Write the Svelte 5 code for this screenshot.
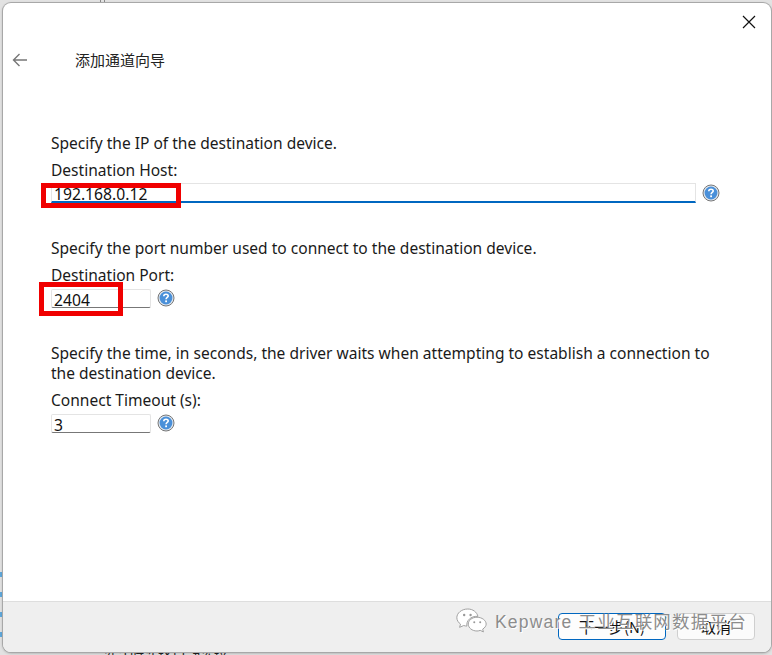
<script>
  const fields = [
    { intro: ['Specify the IP of the destination device.'], label: 'Destination Host:', value: '192.168.0.12', wide: true },
    { intro: ['Specify the port number used to connect to the destination device.'], label: 'Destination Port:', value: '2404' },
    { intro: ['Specify the time, in seconds, the driver waits when attempting to establish a connection to', 'the destination device.'], label: 'Connect Timeout (s):', value: '3' }
  ];
  const ticks = [572, 592, 612, 632];
</script>

<div class="screen">
  <div class="backdrop-line v1"></div>
  <div class="backdrop-line v2"></div>
  <div class="backdrop-text">设计时选择自动连接。</div>
  {#each ticks as t}
    <div class="tick" style="top: {t}px"></div>
  {/each}
  <div class="dialog">
    <header class="titlebar">
      <button class="close" aria-label="close">
        <svg width="14" height="14" viewBox="0 0 14 14"><path d="M1 1L13 13M13 1L1 13" stroke="#111" stroke-width="1.2" fill="none"/></svg>
      </button>
      <div class="nav">
        <svg class="back" width="16" height="14" viewBox="0 0 16 14"><path d="M15 7H1.5M7.5 1L1.5 7L7.5 13" stroke="#777" stroke-width="1.4" fill="none"/></svg>
        <span class="title">添加通道向导</span>
      </div>
    </header>
    <main class="content">
      {#each fields as f}
        <section class="field">
          {#each f.intro as line}<p>{line}</p>{/each}
          <label for={f.label}>{f.label}</label>
          <div class="row">
            <div class="input" class:wide={f.wide} id={f.label}>{f.value}</div>
            <svg class="help" width="18" height="18" viewBox="0 0 18 18">
              <circle cx="9" cy="9" r="8" fill="#dfe6ee" stroke="#777" stroke-width="1"/>
              <circle cx="9" cy="9" r="6.4" fill="#4a90d9"/>
              <path d="M6.8 7.2C6.8 5.9 7.8 5.2 9 5.2C10.3 5.2 11.2 6 11.2 7C11.2 8.4 9.1 8.5 9.1 10.2" stroke="#fff" stroke-width="1.6" fill="none"/>
              <rect x="8.2" y="11.4" width="1.8" height="1.8" fill="#fff"/>
            </svg>
          </div>
        </section>
      {/each}
    </main>
    <footer class="footer">
      <button class="btn primary">下一步(N)</button>
      <button class="btn">取消</button>
    </footer>
  </div>
  <div class="mark one"></div>
  <div class="mark two"></div>
  <div class="watermark">
    <svg width="33" height="28" viewBox="0 0 36 28">
      <path d="M14 2C7 2 2 6.500 2 11.500C2 14.500 4 17 6 18.500L5 22L9.500 20C11 20.500 12 20.600 13 20.600C12 15 17 9.500 25 10C24 5.500 19.500 2 14 2Z" fill="#fff" stroke="#999" stroke-width="1"/>
      <path d="M24 11C18.500 11 14.500 14.500 14.500 18.500C14.500 22.500 18.500 26 24 26C25.500 26 26.500 25.700 27.500 25.300L31 27L30.200 24C32.500 22.500 34 20.500 34 18.500C34 14.500 29.500 11 24 11Z" fill="#fff" stroke="#999" stroke-width="1"/>
      <circle cx="10" cy="8.500" r="1.300" fill="#999"/><circle cx="17" cy="8.500" r="1.300" fill="#999"/>
      <circle cx="21" cy="16.500" r="1.100" fill="#999"/><circle cx="27.500" cy="16.500" r="1.100" fill="#999"/>
    </svg>
    <span>Kepware 工业互联网数据平台</span>
  </div>
</div>

<style>
  :global(body) { margin: 0; }
  .screen {
    position: relative;
    width: 772px;
    height: 655px;
    overflow: hidden;
    background: #e2e2e2;
    font-family: "Noto Sans", "Noto Sans CJK SC", sans-serif;
  }
  .backdrop-line { position: absolute; top: 0; width: 1px; height: 4px; background: #888; }
  .v1 { left: 100px; }
  .v2 { left: 104px; }
  .tick { position: absolute; left: 0; width: 2px; height: 5px; background: #5fa8dc; }
  .backdrop-text {
    position: absolute;
    left: 102px;
    top: 647px;
    font-size: 14px;
    line-height: 20px;
    color: #222;
    white-space: nowrap;
  }
  .dialog {
    position: absolute;
    left: 3px;
    top: 3px;
    width: 768px;
    height: 649px;
    display: flex;
    flex-direction: column;
    background: #fff;
    border-radius: 8px;
    overflow: hidden;
    box-shadow: 0 0 0 1px #a8a8a8, 0 1px 3px rgba(0, 0, 0, 0.35);
  }
  .titlebar { height: 72px; position: relative; flex: none; }
  .close {
    position: absolute;
    top: 12px;
    right: 15px;
    width: 14px;
    height: 14px;
    padding: 0;
    border: 0;
    background: none;
    display: flex;
  }
  .nav {
    display: flex;
    align-items: center;
    height: 20px;
    padding: 47px 0 0 9px;
  }
  .back { flex: none; }
  .title {
    margin-left: 47px;
    color: #222;
    line-height: 20px;
    font-family: "Noto Sans CJK SC", sans-serif;
    font-size: 15px;
  }
  .content {
    flex: 1;
    padding: 58px 0 0 48px;
    color: #1a1a1a;
    font-size: 15.550px;
    line-height: 20px;
  }
  .field { padding-bottom: 1px; margin-bottom: 34px; }
  .field p { margin: 0; white-space: nowrap; }
  .field label { display: block; margin-top: 7px; }
  .row { display: flex; align-items: center; gap: 6px; margin-top: 3px; height: 20px; }
  .input {
    box-sizing: border-box;
    width: 100px;
    height: 19px;
    border: 1px solid #e4e4e4;
    border-bottom: 1px solid #777;
    padding-left: 2px;
    line-height: 20px;
    color: #111;
    font-size: 15.700px;
    border-radius: 2px;
  }
  .input.wide { width: 645px; border-bottom: 2px solid #0067c0; height: 20px; border-radius: 0; line-height: 21px; }
  .help { flex: none; }
  .footer {
    flex: none;
    height: 51px;
    box-sizing: border-box;
    background: #efefef;
    border-top: 1px solid #dedede;
    display: flex;
    justify-content: flex-end;
    align-items: flex-start;
    gap: 11px;
    padding: 11px 16px 0 0;
  }
  .btn {
    width: 78px;
    height: 27px;
    border: 1px solid #cfcfcf;
    border-radius: 4px;
    background: #fbfbfb;
    font-family: "Noto Sans CJK SC", sans-serif;
    font-size: 15px;
    line-height: 1;
    color: #111;
    padding: 0;
  }
  .btn.primary { width: 108px; border-color: #0067c0; background: #fdfdfd; }
  .mark { position: absolute; border: 5px solid #f00000; box-sizing: border-box; }
  .one { left: 41px; top: 183px; width: 140px; height: 25px; }
  .two { left: 39px; top: 282px; width: 84px; height: 34px; }
  .watermark {
    position: absolute;
    left: 455px;
    top: 606px;
    display: flex;
    align-items: center;
    gap: 7px;
    font-family: "Liberation Sans", "Noto Sans CJK SC", sans-serif;
    font-size: 17.500px;
    letter-spacing: 1.200px;
    color: #8c8c8c;
    text-shadow: 1px 1px 0 #fff;
    white-space: nowrap;
  }
</style>
